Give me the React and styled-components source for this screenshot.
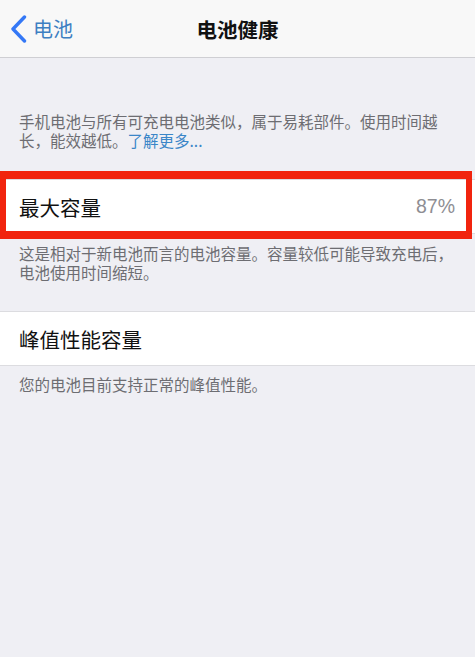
import React from "react";
import styled, { createGlobalStyle } from "styled-components";

const FONT = `"Noto Sans CJK SC", "Noto Sans", "Liberation Sans", sans-serif`;

const Global = createGlobalStyle`
  html, body { margin: 0; padding: 0; background: #efeff4; }
  body { font-family: ${FONT}; -webkit-font-smoothing: antialiased; }
  #root { min-height: 657px; }
`;

const Page = styled.div`
  width: 475px;
  min-height: 657px;
  background: #efeff4;
  display: flex;
  flex-direction: column;
`;

const NavBar = styled.header`
  height: 57px;
  background: #f8f8f8;
  border-bottom: 1px solid #cfcfd3;
  display: grid;
  grid-template-columns: 1fr auto 1fr;
  align-items: center;
  box-sizing: content-box;
`;

const Back = styled.div`
  display: flex;
  align-items: center;
  gap: 6px;
  padding-left: 10px;
  color: #3d7fc2;
  font-size: 20px;
`;

const Title = styled.h1`
  margin: 0;
  font-size: 20.5px;
  font-weight: 600;
  color: #111;
`;

const Footer = styled.div`
  margin: 0;
  padding: ${(p) => p.$pad || "0"};
  padding-left: 19px;
  padding-right: 16px;
  font-size: 15.5px;
  line-height: 18.5px;
  color: #6d6d72;
`;

const Link = styled.span`
  color: #3a86c8;
`;

const Group = styled.section`
  position: relative;
  margin-top: ${(p) => p.$top || "0"};
`;

const Cell = styled.div`
  height: 55px;
  background: #fff;
  border-top: 1px solid #dcdce0;
  border-bottom: 1px solid #dcdce0;
  display: flex;
  align-items: center;
  justify-content: space-between;
  padding: 0 20px 0 19px;
  box-sizing: border-box;
`;

const Label = styled.span`
  font-size: 20.5px;
  color: #111;
`;

const Value = styled.span`
  font-family: "Liberation Sans", "Noto Sans", sans-serif;
  font-size: 19.5px;
  color: #8e8e93;
`;

const Highlight = styled.div`
  position: absolute;
  left: 0;
  top: -8px;
  width: 472px;
  height: 68px;
  border: 8px solid #f1240e;
  border-left-width: 6px;
  border-right-width: 6px;
  box-sizing: border-box;
  pointer-events: none;
`;

export default function App() {
  return (
    <>
      <Global />
      <Page>
        <NavBar>
          <Back>
            <svg width="17" height="28" viewBox="0 0 17 28">
              <path d="M14.5 2 L3 14 L14.5 26" fill="none" stroke="#3478f6" strokeWidth="3.4" strokeLinecap="round" strokeLinejoin="round" />
            </svg>
            <span>电池</span>
          </Back>
          <Title>电池健康</Title>
          <div />
        </NavBar>

        <Footer $pad="54px 0 0">
          手机电池与所有可充电电池类似，属于易耗部件。使用时间越长，能效越低。<Link>了解更多...</Link>
        </Footer>

        <Group $top="30px">
          <Cell>
            <Label>最大容量</Label>
            <Value>87%</Value>
          </Cell>
          <Highlight />
        </Group>
        <Footer $pad="10px 0 0">
          这是相对于新电池而言的电池容量。容量较低可能导致充电后，电池使用时间缩短。
        </Footer>

        <Group $top="30px">
          <Cell>
            <Label>峰值性能容量</Label>
          </Cell>
        </Group>
        <Footer $pad="9px 0 0">您的电池目前支持正常的峰值性能。</Footer>
      </Page>
    </>
  );
}
